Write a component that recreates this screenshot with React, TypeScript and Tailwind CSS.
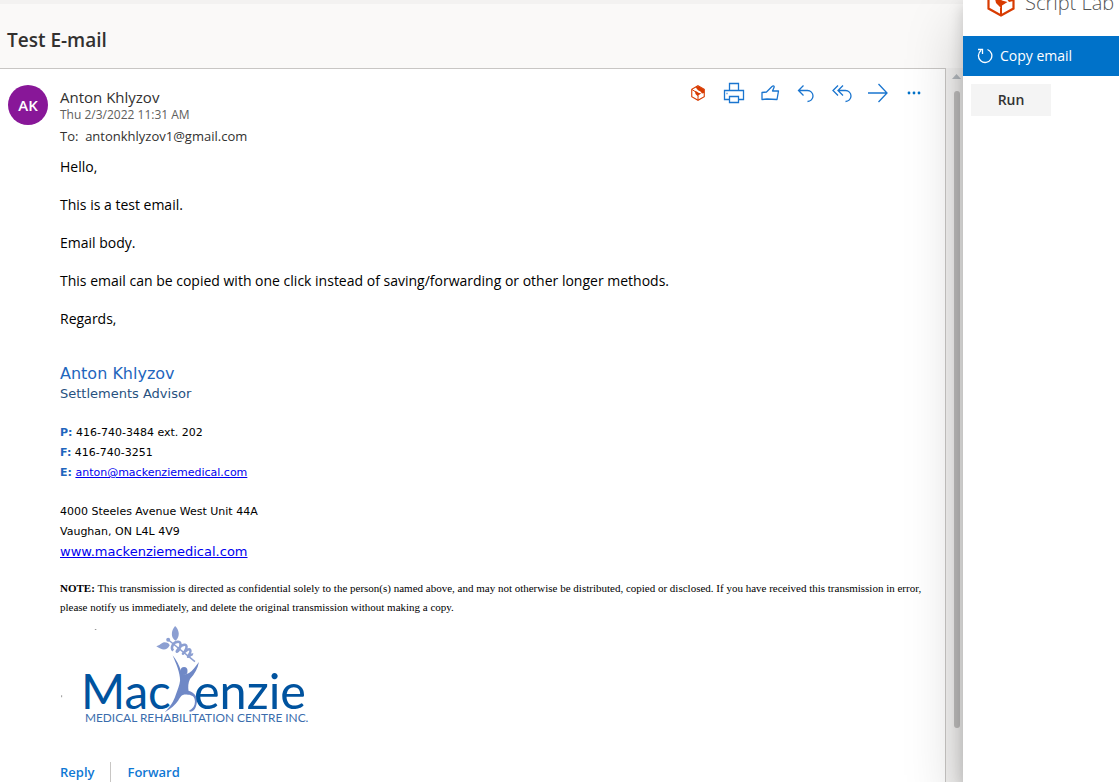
import type { ReactNode } from 'react';

const paragraphs = [
  'Hello,',
  'This is a test email.',
  'Email body.',
  'This email can be copied with one click instead of saving/forwarding or other longer methods.',
  'Regards,',
];

function ScriptLabMark({ className }: { className: string }) {
  return (
    <svg viewBox="0 0 28 32" className={className} aria-hidden="true">
      <path d="M14 1.500 26.500 8.500v15L14 30.500 1.500 23.500v-15z" fill="#fff" stroke="#d83b01" strokeWidth="2.200" />
      <path d="M14 2 26.500 9v7l-4.500 1-3-4-5-2.500L9.500 5z" fill="#d83b01" />
      <path d="M7.500 11.500l4 1.500 3.500 2.500 5.500 1.500-5.500 3.500v3.500l-6-6z" fill="#d83b01" />
      <path d="M14 22.500V30M2 9l6 4" stroke="#d83b01" strokeWidth="2" />
    </svg>
  );
}

function ToolbarButton({ label, children }: { label: string; children: ReactNode }) {
  return (
    <button type="button" aria-label={label} className="flex h-8 w-9 items-center justify-center">
      {children}
    </button>
  );
}

function LineIcon({ children }: { children: ReactNode }) {
  return (
    <svg width="22" height="22" viewBox="0 0 22 22" fill="none" stroke="#1a75cf" strokeWidth="1.300" aria-hidden="true">
      {children}
    </svg>
  );
}

function Toolbar() {
  return (
    <div className="flex">
      <ToolbarButton label="Script Lab">
        <ScriptLabMark className="h-4 w-4" />
      </ToolbarButton>
      <ToolbarButton label="Print">
        <LineIcon>
          <path d="M6.500 8.500V1.500h9v7M6.500 17.500h-5V8.500h19v9h-5M6.500 14.500h9v6h-9z" />
          <path d="M3.500 11.500h1" />
        </LineIcon>
      </ToolbarButton>
      <ToolbarButton label="Like">
        <LineIcon>
          <path d="M3 10.500l4.500-.5 5.500-5.500c1.500-1.300 2.500-.2 2 1L13.500 9h6L18 17.500l-10-.5-5 .5z" strokeLinejoin="round" />
        </LineIcon>
      </ToolbarButton>
      <ToolbarButton label="Reply">
        <LineIcon>
          <path d="M8.500 3.500 3.500 8.500l5 5M3.500 8.500h9a5.500 5.500 0 0 1 0 11" />
        </LineIcon>
      </ToolbarButton>
      <ToolbarButton label="Reply all">
        <LineIcon>
          <path d="M7 3.500l-5 5 5 5M12 3.500l-5 5 5 5M7 8.500h7.500a5.500 5.500 0 0 1 0 11" />
        </LineIcon>
      </ToolbarButton>
      <ToolbarButton label="Forward">
        <LineIcon>
          <path d="M1 11h19M11.500 2 20 11l-8.500 9" />
        </LineIcon>
      </ToolbarButton>
      <ToolbarButton label="More actions">
        <svg width="14" height="4" viewBox="0 0 14 4" fill="#0072c9" aria-hidden="true">
          <circle cx="2" cy="2" r="1.400" />
          <circle cx="7" cy="2" r="1.400" />
          <circle cx="12" cy="2" r="1.400" />
        </svg>
      </ToolbarButton>
    </div>
  );
}

function CompanyLogo() {
  return (
    <svg width="260" height="114" viewBox="60 617 260 114" role="img" aria-label="Mackenzie Medical Rehabilitation Centre Inc." className="block">
      <path d="M94 629h1.500v1H94zM60 696h1v2h-1z" fill="#999" />
      <g fill="#8c9fd2">
        <path d="M175 626c4 4 5.500 10 .5 15-5-3-5-10-.5-15z" />
        <path d="M156 646.500c4-1 5-3.500 8-4 3 0 5 1 5.500 3-3 6-8 5-13.500 1z" />
        <circle cx="168" cy="640" r="2" />
      </g>
      <g fill="none" stroke="#8c9fd2">
        <path d="M168 640 195 662" strokeWidth="1.500" />
        <path d="M173 651c-3-3 0-9 5-9s1 9-1 10 4-8 8-7-1 8-2 9 5-6 7-4-2 6-2 7 3-3 5-2" strokeWidth="2.500" />
      </g>
      <g fill="#6f88c6">
        <ellipse cx="184" cy="671.500" rx="3.500" ry="4" />
        <path d="M172.500 655.500c4 5 6.500 10 8.500 16l3 4 5-2c4-2 6-6 10-11-1 6-4 12-9 17-2 4-2 8-1.500 12 6 2 9 6 8.500 11-1 7-3 10-7 10l-1-1c4-2 6-5 6-9 0-5-3-7-7-7-6-1-7 1-10 6-3 4-7 8-13.500 11.500 6-6 9-11 11-17 2-6 4-10 4.500-15 0-8-4-17-7.500-25.500z" />
      </g>
      <g fill="#00539f" fontFamily="Lato, sans-serif">
        <text x="80" y="710" fontSize="48">Mac</text>
        <text x="194" y="710" fontSize="49">enzie</text>
        <text x="84" y="723" fontSize="12" fill="#3a6cac">MEDICAL REHABILITATION CENTRE INC.</text>
      </g>
    </svg>
  );
}

function Signature() {
  return (
    <div className="mt-9 font-['DejaVu_Sans',Verdana,sans-serif] text-[11px] leading-5 text-black">
      <p className="text-base leading-5 text-[#1f66bd]">Anton Khlyzov</p>
      <p className="text-[13px] leading-5 text-[#27517f]">Settlements Advisor</p>
      <div className="mt-[19px]">
        <p><b className="text-[#1f66bd]">P:</b> 416-740-3484 ext. 202</p>
        <p><b className="text-[#1f66bd]">F:</b> 416-740-3251</p>
        <p>
          <b className="text-[#1f66bd]">E:</b>{' '}
          <a href="mailto:anton@mackenziemedical.com" className="text-[#0000ee] underline">anton@mackenziemedical.com</a>
        </p>
      </div>
      <div className="mt-[19px]">
        <p>4000 Steeles Avenue West Unit 44A</p>
        <p>Vaughan, ON L4L 4V9</p>
        <p className="text-[13px] leading-[19px]">
          <a href="http://www.mackenziemedical.com" className="text-[#0000ee] underline">www.mackenziemedical.com</a>
        </p>
      </div>
    </div>
  );
}

function Message() {
  return (
    <article className="flex flex-1 gap-3 border-t border-r border-[#c8c6c4] bg-white pt-4 pl-2">
      <div className="flex size-10 shrink-0 items-center justify-center rounded-full bg-[#881798] text-[15px] font-semibold text-white">
        AK
      </div>
      <div className="flex min-w-0 flex-1 flex-col">
        <header className="flex justify-between pr-[13px]">
          <div className="text-[#323130]">
            <h2 className="pt-0.5 text-[15px] leading-5">Anton Khlyzov</h2>
            <p className="text-xs leading-4 text-[#605e5c]">Thu 2/3/2022 11:31 AM</p>
            <p className="mt-[3px] text-[13px] leading-5">To:&nbsp; antonkhlyzov1@gmail.com</p>
          </div>
          <div className="-mt-2">
            <Toolbar />
          </div>
        </header>
        <div className="mt-[11px] flex flex-col gap-[19px] text-sm leading-[19px] text-black">
          {paragraphs.map((text) => (
            <p key={text}>{text}</p>
          ))}
        </div>
        <Signature />
        <p className="mt-[18px] pr-4 font-['Liberation_Serif','Times_New_Roman',serif] text-[11px] leading-[19px] text-black">
          <b>NOTE:</b> This transmission is directed as confidential solely to the person(s) named above, and may not
          otherwise be distributed, copied or disclosed. If you have received this transmission in error, please notify
          us immediately, and delete the original transmission without making a copy.
        </p>
        <CompanyLogo />
        <footer className="mt-8 flex items-center text-[13px] leading-5 font-semibold text-[#0f78d4]">
          <button type="button" className="border-r border-[#c8c6c4] pr-4">Reply</button>
          <button type="button" className="pl-4">Forward</button>
        </footer>
      </div>
    </article>
  );
}

function ScrollBar() {
  return (
    <div className="flex w-[17px] flex-col items-center bg-[#f3f2f1] pt-1.5 pl-1" aria-hidden="true">
      <svg width="9" height="5" viewBox="0 0 9 5" fill="#b5bbc0">
        <path d="M0 5 4.500 0 9 5z" />
      </svg>
      <div className="mt-3 h-[90%] w-1.5 rounded-full bg-[#c0bfbe]" />
    </div>
  );
}

function ScriptPane() {
  return (
    <aside className="relative w-[156px] shrink-0 bg-white shadow-[0_26px_58px_rgba(0,0,0,0.22),0_5px_14px_rgba(0,0,0,0.18)]">
      <div className="flex h-9 items-end gap-2.5 overflow-hidden pl-6">
        <ScriptLabMark className="mb-[19px] h-8 w-7 shrink-0" />
        <span className="mb-[21px] text-xl leading-6 font-light whitespace-nowrap text-[#555]">Script Lab</span>
      </div>
      <div className="flex h-10 items-center gap-[7px] bg-[#0072c9] pl-3.5 text-sm text-white">
        <svg width="16" height="16" viewBox="0 0 16 16" fill="none" stroke="#fff" strokeWidth="1.300" aria-hidden="true">
          <path d="M10.500 1.500A6.700 6.700 0 1 1 4 2.500M1 1.500h4.500v4.500" />
        </svg>
        Copy email
      </div>
      <button type="button" className="mt-2 ml-2 h-8 w-20 bg-[#f4f4f4] text-sm font-semibold text-[#333]">Run</button>
    </aside>
  );
}

export default function App() {
  return (
    <div className="flex h-screen overflow-hidden bg-[#faf9f8] font-['Open_Sans','Segoe_UI',sans-serif]">
      <main className="flex min-w-0 flex-1 flex-col">
        <h1 className="border-t-4 border-[#f3f2f1] pt-6 pb-4 pl-[7px] text-[19px] leading-6 font-semibold text-[#323130]">Test E-mail</h1>
        <div className="flex min-h-0 flex-1">
          <Message />
          <ScrollBar />
        </div>
      </main>
      <ScriptPane />
    </div>
  );
}
